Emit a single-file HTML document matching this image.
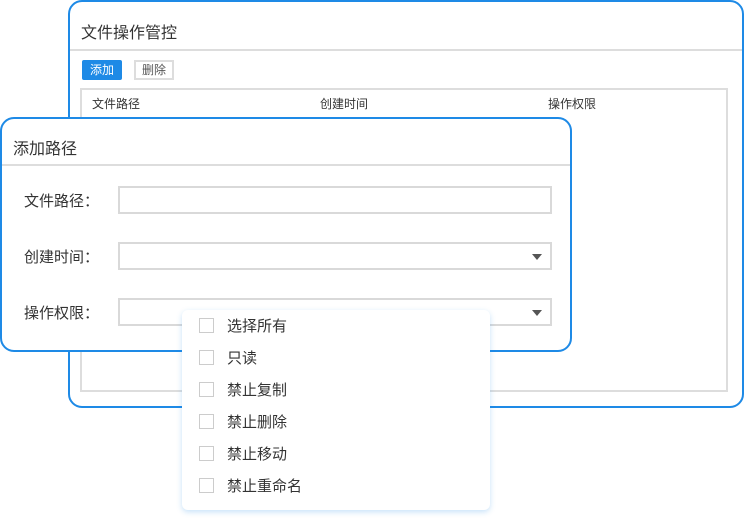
<!DOCTYPE html>
<html><head><meta charset="utf-8"><style>
*{margin:0;padding:0;box-sizing:border-box}
body{width:744px;height:518px;background:#fff;position:relative;overflow:hidden;font-family:"Liberation Sans","Noto Sans CJK SC",sans-serif;color:#333}
.p{position:absolute;background:#fff;border:2px solid #1e8ae6;border-radius:14px}
.abs{position:absolute}
.inp{position:absolute;left:118px;width:434px;height:28px;border:2px solid #d9d9d9;background:#fff}
.arr{position:absolute;right:8px;top:10px;width:0;height:0;border-left:5px solid transparent;border-right:5px solid transparent;border-top:6px solid #555}
.lab{position:absolute;left:24px;font-size:15px;color:#333}
.dd{position:absolute;left:182px;top:310px;width:308px;height:200px;background:#fff;border-radius:6px;box-shadow:0 2px 6px rgba(30,138,230,.25)}
.it{position:absolute;left:17px;font-size:15px;color:#333;line-height:20px}
.it i{display:inline-block;width:15px;height:15px;border:1.5px solid #ccc;vertical-align:-2px;margin-right:13px}
</style></head><body>
<div class="p" style="left:68px;top:0;width:676px;height:408px">
 <div class="abs" style="left:11px;top:17px;font-size:16px">文件操作管控</div>
 <div class="abs" style="left:0;top:47px;width:672px;height:2px;background:#ddd"></div>
 <div class="abs" style="left:12px;top:58px;width:40px;height:20px;background:#1e8ae6;color:#fff;font-size:12px;text-align:center;line-height:20px;border-radius:2px">添加</div>
 <div class="abs" style="left:64px;top:58px;width:40px;height:20px;border:2px solid #ddd;font-size:12px;text-align:center;line-height:16px;color:#555">删除</div>
 <div class="abs" style="left:10px;top:86px;width:648px;height:304px;border:2px solid #ddd"></div>
 <div class="abs" style="left:22px;top:93px;font-size:12px">文件路径</div>
 <div class="abs" style="left:250px;top:93px;font-size:12px">创建时间</div>
 <div class="abs" style="left:478px;top:93px;font-size:12px">操作权限</div>
</div>
<div class="p" style="left:0;top:117px;width:572px;height:235px">
 <div class="abs" style="left:11px;top:16px;font-size:16px">添加路径</div>
 <div class="abs" style="left:0;top:45px;width:568px;height:2px;background:#ddd"></div>
</div>
<div class="lab" style="top:190px">文件路径：</div>
<div class="lab" style="top:246px">创建时间：</div>
<div class="lab" style="top:302px">操作权限：</div>
<div class="inp" style="top:186px"></div>
<div class="inp" style="top:242px"><div class="arr"></div></div>
<div class="inp" style="top:298px"><div class="arr"></div></div>
<div class="dd">
 <div class="it" style="top:7px"><i></i>选择所有</div>
 <div class="it" style="top:39px"><i></i>只读</div>
 <div class="it" style="top:71px"><i></i>禁止复制</div>
 <div class="it" style="top:103px"><i></i>禁止删除</div>
 <div class="it" style="top:135px"><i></i>禁止移动</div>
 <div class="it" style="top:167px"><i></i>禁止重命名</div>
</div>
</body></html>
